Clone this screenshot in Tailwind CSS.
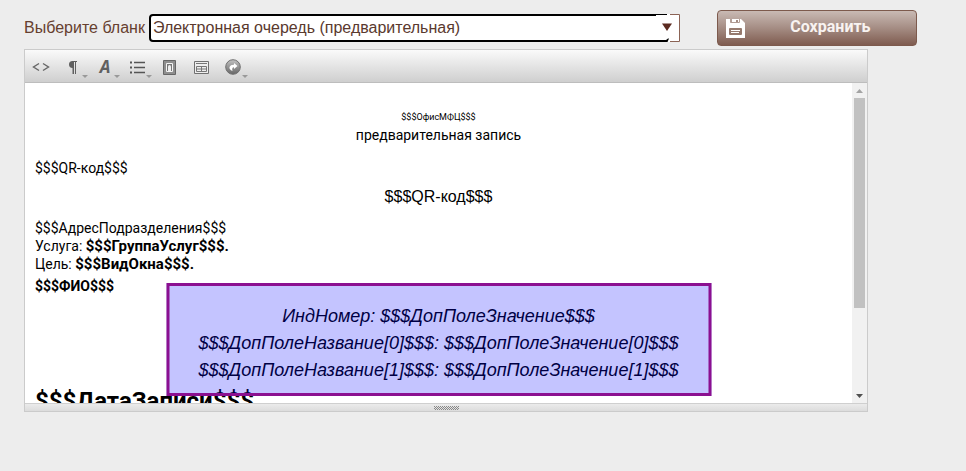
<!DOCTYPE html>
<html lang="ru">
  <head>
    <meta charset="UTF-8" />
    <meta name="viewport" content="width=device-width, initial-scale=1" />
    <title>Редактор бланков</title>
    <script src="https://cdn.jsdelivr.net/npm/@tailwindcss/browser@4"></script>
    <link rel="icon" href="data:," />
  </head>
  <body class="min-h-screen bg-[#ededed] font-['Liberation_Sans',sans-serif] text-base text-black">
    <header class="flex items-start pl-6 pt-[10px]">
      <div class="flex items-center pt-1">
        <label for="blank" class="mr-1 text-[#66402f]">Выберите бланк</label>
        <div class="relative w-[531px]">
          <select
            id="blank"
            class="block h-7 w-[519px] appearance-none rounded border-2 border-black bg-white pl-0.5 text-[#5a392e] outline-none"
          >
            <option>Электронная очередь (предварительная)</option>
          </select>
          <!-- drop-down arrow -->
          <svg width="24" height="28" viewBox="0 0 24 28" fill="none" class="pointer-events-none absolute right-0 top-0">
            <path d="M0 0h24v28H0z" fill="#fff" />
            <path d="M0 .5H10M14 .5H23.500V27.500H14" stroke="#8b6355" />
            <path d="M0 0h11v1H0zM0 26h10l2-1.500h1l-1.500 3.500H0z" fill="#000" />
            <path d="M6 9.500h10L11 17z" fill="#5c2b20" />
          </svg>
        </div>
      </div>
      <button
        type="button"
        class="ml-[37px] flex h-9 w-[200px] items-center rounded border border-[#7d5a4d] bg-linear-to-b from-[#c9bab4] via-[#a58d84] to-[#7f5c50] pl-2 text-[#f8f3f1]"
      >
        <svg width="19" height="19" viewBox="0 0 19 19" fill="none">
          <path d="M0 0H4V3Q4 4 5 4H13Q14 4 14 3V0H15L19 4V19H0z" fill="#fff" />
          <path d="M6 0h7v3H6z" fill="#fff" />
          <path d="M10 1h2v2h-2z" fill="#a58d84" />
          <rect x="3" y="9" width="13" height="7" rx="1" fill="#967a6e" />
          <path d="M5 11.500h9M5 13.500h8" stroke="#fff" />
        </svg>
        <span class="flex-1 pb-0.5 text-center font-['Roboto',sans-serif] text-base leading-6 font-bold">Сохранить</span>
      </button>
    </header>

    <main class="mt-[3px] mr-6 ml-6 max-w-[844px] border border-[#cbcbcb]">
      <div class="flex h-[33px] items-end border-b border-[#bdbdbd] bg-linear-to-b from-[#fafafa] to-[#cfcfcf]">
        <button type="button" aria-label="HTML" class="flex h-[30px] w-8 items-center justify-center">
          <svg width="18" height="10" viewBox="0 0 18 10" fill="none" stroke="#666" stroke-width="1.4"><path d="M7 1.5L1.5 5L7 8.5M11 1.5L16.5 5L11 8.5" /></svg>
        </button>
        <button type="button" aria-label="Абзац" class="relative flex h-[30px] w-8 items-center justify-center">
          <svg width="8" height="13" viewBox="0 0 8 13" fill="#606060" class="mr-px"><path d="M3.500 0H8v1H7v12H6V1H5v12H3.500V7C1.200 7 0 5.500 0 3.500S1.200 0 3.500 0z" /></svg>
          <svg width="6" height="3" viewBox="0 0 6 3" fill="#999" class="absolute right-[1px] bottom-1"><path d="M0 0h6L3 3z" /></svg>
        </button>
        <button type="button" aria-label="Шрифт" class="relative flex h-[30px] w-8 items-center justify-center">
          <span class="text-[17px] leading-4 font-bold text-[#606060] italic font-['Open_Sans',sans-serif]">A</span>
          <svg width="6" height="3" viewBox="0 0 6 3" fill="#999" class="absolute right-[1px] bottom-1"><path d="M0 0h6L3 3z" /></svg>
        </button>
        <button type="button" aria-label="Список" class="relative flex h-[30px] w-8 items-center justify-center">
          <svg width="15" height="13" viewBox="0 0 15 13" fill="none" stroke="#555" stroke-width="2"><path d="M0 1.500h2M0 6.500h2M0 11.500h2" /><path d="M4 1.500h11M4 6.500h11M4 11.500h11" stroke-width="1.500" /></svg>
          <svg width="6" height="3" viewBox="0 0 6 3" fill="#999" class="absolute right-[1px] bottom-1"><path d="M0 0h6L3 3z" /></svg>
        </button>
        <button type="button" aria-label="Изображение" class="flex h-[30px] w-8 items-center justify-center">
          <svg width="13" height="15" viewBox="0 0 13 15" fill="none"><path d="M.5.500h12v14H.5z" fill="#8e8e8e" stroke="#666" /><path d="M3.500 3.500h6v8h-6z" fill="#777" stroke="#f4f4f4" /><path d="M5 11V6.500Q5 5 6.500 5T8 6.500V11z" fill="#eee" /></svg>
        </button>
        <button type="button" aria-label="Таблица" class="flex h-[30px] w-8 items-center justify-center">
          <svg width="15" height="13" viewBox="0 0 15 13" fill="none"><path d="M.5.500h14v12H.5z" fill="#eee" stroke="#707070" /><path d="M2 2.500h11" stroke="#777" /><path d="M2.500 5.500h10v5h-10zM7.500 5v6M2 8h11" stroke="#777" /></svg>
        </button>
        <button type="button" aria-label="Ссылка" class="relative flex h-[30px] w-8 items-center justify-center">
          <svg width="16" height="16" viewBox="0 0 16 16" fill="none" class="mr-px">
            <defs><linearGradient id="ball" x2="0" y2="1"><stop stop-color="#c2c2c2" /><stop offset="1" stop-color="#666" /></linearGradient></defs>
            <circle cx="8" cy="8" r="7.300" fill="url(#ball)" stroke="#707070" />
            <path d="M9 4L12.500 7L9 10V8.300Q6.500 8.500 7.500 12Q4 10.500 4.500 8Q5.500 5.500 9 5.700z" fill="#fff" />
          </svg>
          <svg width="6" height="3" viewBox="0 0 6 3" fill="#999" class="absolute right-[1px] bottom-1"><path d="M0 0h6L3 3z" /></svg>
        </button>
      </div>

      <div class="flex h-80 bg-white">
        <div class="relative flex-1 overflow-hidden px-[10px] pt-[25px] font-['Roboto',sans-serif] text-sm leading-[18px]">
          <p class="text-center text-[9px] leading-[18px]">$$$ОфисМФЦ$$$</p>
          <p class="text-center">предварительная запись</p>
          <p class="mt-[15px]">$$$QR-код$$$</p>
          <p class="mt-[11px] text-center font-['Liberation_Sans',sans-serif] text-base leading-[18px]">$$$QR-код$$$</p>
          <p class="mt-[13px]">$$$АдресПодразделения$$$</p>
          <p>Услуга: <b class="text-[15px] leading-4">$$$ГруппаУслуг$$$.</b></p>
          <p>Цель: <b class="text-[15px] leading-4">$$$ВидОкна$$$.</b></p>
          <p class="mt-1 font-bold">$$$ФИО$$$</p>
          <p class="mt-[90px] text-2xl leading-8 font-bold">$$$ДатаЗаписи$$$</p>
          <!-- selected block, floats over the text -->
          <div class="absolute top-[200px] left-1/2 w-[545px] -translate-x-1/2 border-3 border-[#8b1090] bg-[#0000ff]/23 pt-[17px] pb-[9px] text-center font-['Liberation_Sans',sans-serif] text-lg leading-[27px] text-[#000044] italic">
            <p>ИндНомер: $$$ДопПолеЗначение$$$</p>
            <p>$$$ДопПолеНазвание[0]$$$: $$$ДопПолеЗначение[0]$$$</p>
            <p>$$$ДопПолеНазвание[1]$$$: $$$ДопПолеЗначение[1]$$$</p>
          </div>
        </div>
        <!-- scrollbar -->
        <div class="flex w-[15px] flex-col items-center bg-[#f1f1f1]">
          <div class="flex h-[15px] items-center"><svg width="7" height="4" viewBox="0 0 7 4" fill="#a3a3a3"><path d="M0 4h7L3.500 0z" /></svg></div>
          <div class="h-[210px] w-[11px] bg-[#c1c1c1]"></div>
          <div class="mt-auto flex h-[15px] items-center"><svg width="7" height="4" viewBox="0 0 7 4" fill="#505050"><path d="M0 0h7L3.500 4z" /></svg></div>
        </div>
      </div>

      <div class="flex h-2 items-center justify-center border-t border-[#cfcfcf] bg-linear-to-b from-[#ebebeb] to-[#dcdcdc]">
        <svg width="25" height="4" viewBox="0 0 25 4" stroke="#888" stroke-dasharray="1 1"><path d="M0 .5h25M1 1.500h24M0 2.500h25M1 3.500h24" /></svg>
      </div>
    </main>
  </body>
</html>
